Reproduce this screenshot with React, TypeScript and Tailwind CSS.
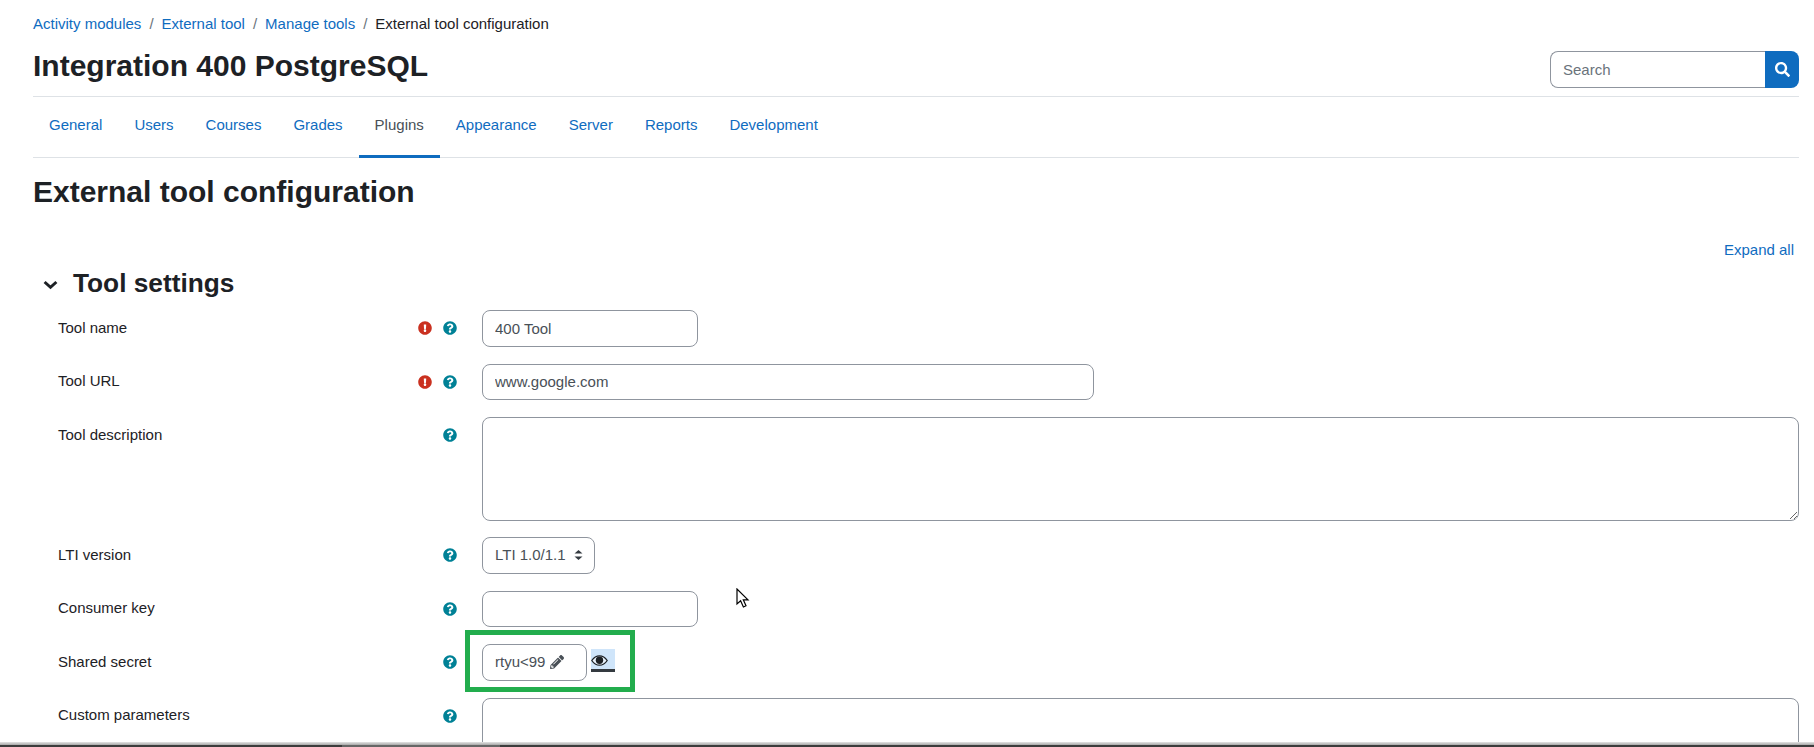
import { FaExclamationCircle, FaPencilAlt, FaQuestionCircle, FaSearch } from 'react-icons/fa';

const crumbs = ['Activity modules', 'External tool', 'Manage tools'];
const tabs = ['General', 'Users', 'Courses', 'Grades', 'Plugins', 'Appearance', 'Server', 'Reports', 'Development'];

const inputClass = 'h-[36.5px] rounded-lg border border-[#8f959e] bg-white px-3 text-[15px] text-[#495057] outline-none';

interface FieldRowProps {
  label: string;
  required?: boolean;
  children: React.ReactNode;
}

const FieldRow = ({ label, required, children }: FieldRowProps) => (
  <div className="mb-[17px] flex">
    <div className="flex w-[449px] shrink-0 pl-[25px]">
      <label className="flex-1 pt-[6.5px] leading-[22.5px]">{label}</label>
      <div className="flex h-[36.5px] items-center pr-[25px]">
        {required && <FaExclamationCircle className="mr-[11px] size-[14px] text-[#ca3120]" />}
        <FaQuestionCircle className="size-[14px] text-[#008196]" />
      </div>
    </div>
    {children}
  </div>
);

export default function App() {
  return (
    <div className="relative flex h-[747px] flex-col overflow-hidden bg-white font-['Liberation_Sans',Arial,sans-serif] text-[15px] text-[#1d2125]">
      <div className="min-h-0 flex-1 overflow-hidden pl-[33px] pr-[15px]">
        <nav className="flex h-[47px] items-center leading-[22px]">
          {crumbs.map(c => (
            <span key={c} className="flex">
              <a className="text-[#0f6cbf]">{c}</a>
              <span className="px-2 text-[#6a737b]">/</span>
            </span>
          ))}
          <span>External tool configuration</span>
        </nav>

        <header className="flex h-[50px] items-start justify-between border-b border-[#dee2e6]">
          <h1 className="text-[30px] font-bold leading-[38px]">Integration 400 PostgreSQL</h1>
          <div className="mt-[4px] flex h-[37px] w-[249px]">
            <div className="flex flex-1 items-center rounded-l-lg border border-r-0 border-[#8f959e] px-3 pt-px text-[#6a737b]">Search</div>
            <button className="flex w-[34px] items-center justify-center rounded-r-lg bg-[#0f6cbf] text-white">
              <FaSearch className="size-[15px]" />
            </button>
          </div>
        </header>

        <nav className="flex h-[61px] border-b border-[#dee2e6]">
          {tabs.map(t => (
            <a
              key={t}
              className={`-mb-px flex items-center border-b-[3px] px-4 pb-px ${t === 'Plugins' ? 'border-[#0f6cbf] text-[#495057]' : 'border-transparent text-[#0f6cbf]'}`}
            >
              {t}
            </a>
          ))}
        </nav>

        <h2 className="mt-[15px] text-[30px] font-bold leading-[38px]">External tool configuration</h2>

        <div className="mt-[28px] flex justify-end pr-[5px] leading-[22px] text-[#0f6cbf]">Expand all</div>

        <div className="mt-[1px] flex h-[42px] items-center">
          <svg width="15" height="10" viewBox="0 0 15 10" className="ml-[10px] mt-[4px]">
            <path d="M1.600 2l5.900 5.300L13.400 2" fill="none" stroke="#1d2125" strokeWidth="3" />
          </svg>
          <h3 className="ml-[15px] text-[26.25px] font-bold leading-[32px]">Tool settings</h3>
        </div>

        <div className="mt-[6px]">
          <FieldRow label="Tool name" required>
            <input readOnly value="400 Tool" className={`${inputClass} w-[216px]`} />
          </FieldRow>
          <FieldRow label="Tool URL" required>
            <input readOnly value="www.google.com" className={`${inputClass} w-[612px]`} />
          </FieldRow>
          <FieldRow label="Tool description">
            <textarea readOnly className={`${inputClass} -mb-px h-[104px] w-full`} />
          </FieldRow>
          <FieldRow label="LTI version">
            <div className={`${inputClass} flex w-[112.5px] items-center justify-between pr-[11px]`}>
              LTI 1.0/1.1
              <svg width="9" height="10" viewBox="0 0 9 10" className="text-[#343a40]">
                <path d="M4.5 0 8.5 3.5H.5zM4.5 10 .5 6.5h8z" fill="currentColor" />
              </svg>
            </div>
          </FieldRow>
          <FieldRow label="Consumer key">
            <input readOnly className={`${inputClass} w-[216px]`} />
          </FieldRow>
          <FieldRow label="Shared secret">
            <div className="relative flex">
              <div className={`${inputClass} flex w-[104.5px] items-center`}>
                rtyu&lt;99
                <FaPencilAlt className="ml-[5px] size-[14px] text-[#495057]" />
              </div>
              <div className="ml-[4px] mt-[5px] flex h-[23px] w-[24px] items-center border-b-[3px] border-[#343a40] bg-[#cfe5fa] pt-[3px]">
                <svg width="17" height="11" viewBox="0 0 17 11">
                  <path d="M.8 5.5C3 2.2 5.6.8 8.5.8s5.500 1.400 7.700 4.700c-2.200 3.300-4.800 4.700-7.700 4.700S3 8.800.8 5.500z" fill="#e8f2fc" stroke="#1d2125" strokeWidth="1.3" />
                  <circle cx="8.500" cy="5.200" r="3.700" fill="#1d2125" />
                </svg>
              </div>
              {/* green highlight drawn over the screenshot */}
              <div className="absolute -left-[17px] -top-[14px] h-[62px] w-[170px] border-[5px] border-[#22ad4d]" />
            </div>
          </FieldRow>
          <FieldRow label="Custom parameters">
            <textarea readOnly className={`${inputClass} h-[103px] w-full`} />
          </FieldRow>
        </div>
      </div>

      <div className="h-[3px] shrink-0 bg-gradient-to-b from-[#e4e4e4] to-[#a8a8a8]" />
      <div className="h-[2px] shrink-0 bg-[#3c3c3c] pl-[342px]">
        <div className="h-[2px] w-[158px] bg-[#666]" />
      </div>

      <svg className="absolute left-[736px] top-[588px]" width="14" height="20" viewBox="0 0 14 20">
        <path d="M1 1v15l3.6-3.2L7.4 19l2.6-1.2-2.7-6H12L1 1z" fill="#fff" stroke="#000" strokeWidth="1.2" />
      </svg>
    </div>
  );
}
